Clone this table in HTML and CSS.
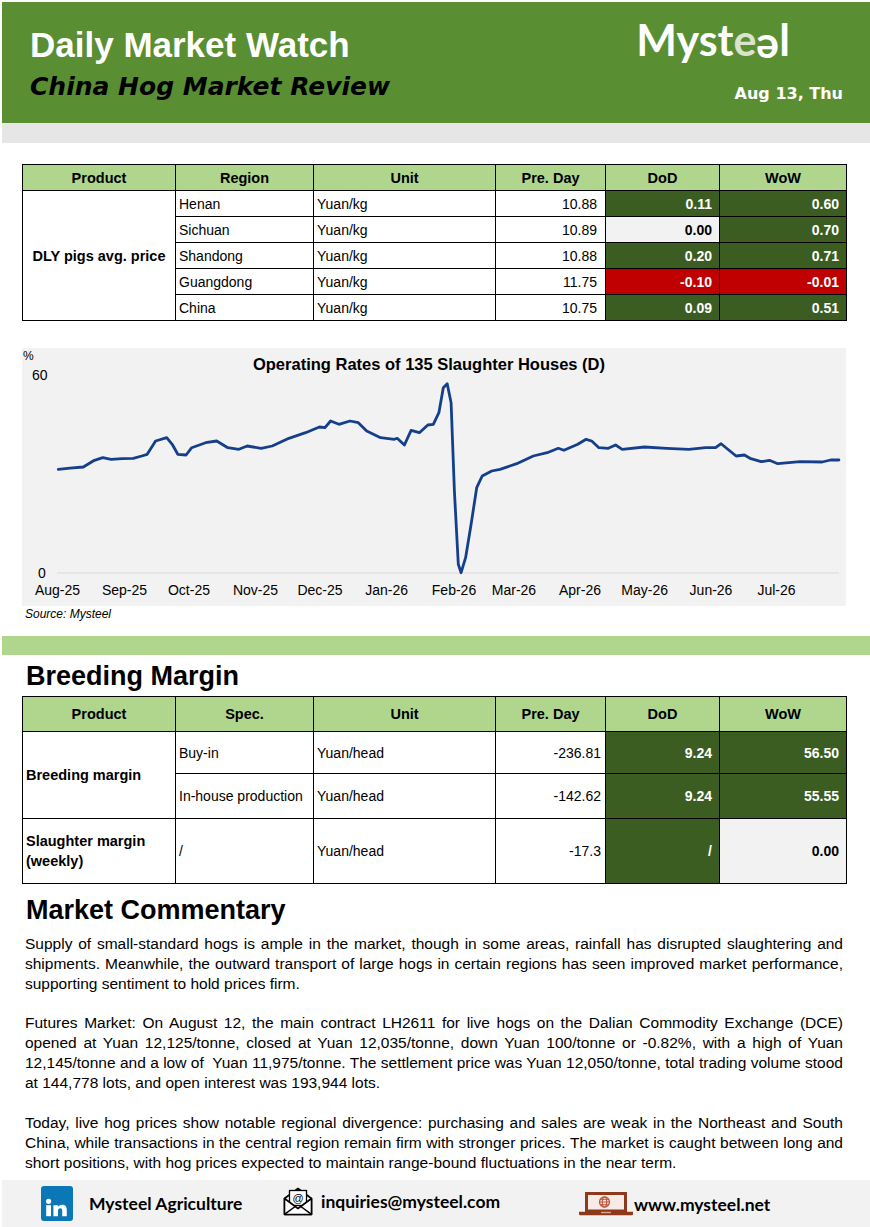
FILE: index.html
```html
<!DOCTYPE html>
<html lang="en">
<head>
<meta charset="utf-8">
<title>Daily Market Watch - China Hog Market Review</title>
<link rel="stylesheet" href="styles.css">
</head>
<body>
<div class="page">
  <header class="masthead">
    <div class="titles">
      <h1 class="title">Daily Market Watch</h1>
      <h2 class="subtitle">China Hog Market Review</h2>
    </div>
    <div class="brand">
      <div class="logo">Myst<span class="e1">e</span><span class="e2">e</span>l</div>
      <div class="date">Aug 13, Thu</div>
    </div>
  </header>
  <div class="band-gray"></div>

  <section class="content">
    <table class="data t1">
      <colgroup>
        <col class="c1"><col class="c2"><col class="c3"><col class="c4"><col class="c5"><col class="c6">
      </colgroup>
      <tr class="hd"><th>Product</th><th>Region</th><th>Unit</th><th>Pre. Day</th><th>DoD</th><th>WoW</th></tr>
      <tr><td class="prod" rowspan="5">DLY pigs avg. price</td><td>Henan</td><td>Yuan/kg</td><td class="num">10.88</td><td class="pos">0.11</td><td class="pos">0.60</td></tr>
      <tr><td>Sichuan</td><td>Yuan/kg</td><td class="num">10.89</td><td class="zero">0.00</td><td class="pos">0.70</td></tr>
      <tr><td>Shandong</td><td>Yuan/kg</td><td class="num">10.88</td><td class="pos">0.20</td><td class="pos">0.71</td></tr>
      <tr><td>Guangdong</td><td>Yuan/kg</td><td class="num">11.75</td><td class="neg">-0.10</td><td class="neg">-0.01</td></tr>
      <tr><td>China</td><td>Yuan/kg</td><td class="num">10.75</td><td class="pos">0.09</td><td class="pos">0.51</td></tr>
    </table>

    <svg class="chart" width="824" height="258" viewBox="22 347 824 258">
      <text class="ax-unit" x="23" y="359">%</text>
      <text class="ch-title" x="429" y="369" text-anchor="middle">Operating Rates of 135 Slaughter Houses (D)</text>
      <text class="ax" x="32" y="379">60</text>
      <text class="ax" x="38" y="577">0</text>
      <line x1="57" y1="572" x2="839" y2="572" stroke="#d9d9d9" stroke-width="1"/>
      <polyline fill="none" stroke="#153f8b" stroke-width="2.8" stroke-linejoin="round" stroke-linecap="round"
        points="58.3,468.3 70,467.2 83.3,466 94.4,459.3 102.8,456.7 111.1,458.3 122,457.6 133.3,457.3 141.7,455 147.2,453.3 155.6,440 166.7,436.7 172.2,443.3 177.8,453.3 186.1,454 191.7,446.7 205.6,441.7 216.7,440 227.8,446.7 238.9,448.3 247.2,445 261.1,447.3 272.2,445 288.9,437.3 305.6,431.7 319.4,426 325,426.7 330.6,420 338.9,423.3 350,420 358.3,421.7 366.7,430 380.6,436.7 394.4,438.3 397.2,437.3 404.4,444 411.1,429.3 419.4,431.7 427.8,424 433.3,423.3 438.9,411.7 443.3,386.7 447.2,382.7 451.1,401.7 454.4,490 458.3,563.3 461.1,571.7 465.6,556.7 471.1,523.3 476.7,486.7 482.2,475 491.7,470 500,468.3 516.7,462.7 533.3,455 547.2,451.7 558.3,447.3 563.9,449.3 577.8,443.3 586.1,438.3 591.7,440 598.9,446.7 608.3,447.3 615.6,444 622.2,448.3 644.4,446 666.7,447.3 688.9,448.3 705.6,446.7 715.6,446.7 721.1,442.7 727.8,448.3 736.1,455 744.4,454 750,457.3 761.1,460.7 769.4,459.3 777.8,462.7 800,460.7 822.2,461 830.6,459 838.9,459"/>
      <g class="ax" text-anchor="middle">
        <text x="57.5" y="594">Aug-25</text>
        <text x="124.5" y="594">Sep-25</text>
        <text x="189" y="594">Oct-25</text>
        <text x="255.5" y="594">Nov-25</text>
        <text x="320" y="594">Dec-25</text>
        <text x="386.7" y="594">Jan-26</text>
        <text x="454" y="594">Feb-26</text>
        <text x="514" y="594">Mar-26</text>
        <text x="580" y="594">Apr-26</text>
        <text x="644.7" y="594">May-26</text>
        <text x="711" y="594">Jun-26</text>
        <text x="776.5" y="594">Jul-26</text>
      </g>
    </svg>
    <div class="source">Source: Mysteel</div>
  </section>

  <div class="band-green"></div>

  <section class="content">
    <h2 class="section-title">Breeding Margin</h2>
    <table class="data t2">
      <colgroup>
        <col class="c1"><col class="c2"><col class="c3"><col class="c4"><col class="c5"><col class="c6">
      </colgroup>
      <tr class="hd"><th>Product</th><th>Spec.</th><th>Unit</th><th>Pre. Day</th><th>DoD</th><th>WoW</th></tr>
      <tr class="r1"><td class="prod-left" rowspan="2">Breeding margin</td><td>Buy-in</td><td>Yuan/head</td><td class="num">-236.81</td><td class="pos">9.24</td><td class="pos">56.50</td></tr>
      <tr class="r2"><td>In-house production</td><td>Yuan/head</td><td class="num">-142.62</td><td class="pos">9.24</td><td class="pos">55.55</td></tr>
      <tr class="r3"><td class="prod-left wrap">Slaughter margin (weekly)</td><td>/</td><td>Yuan/head</td><td class="num">-17.3</td><td class="pos">/</td><td class="zero">0.00</td></tr>
    </table>

    <h2 class="section-title commentary-title">Market Commentary</h2>
    <p class="para p1">Supply of small-standard hogs is ample in the market, though in some areas, rainfall has disrupted slaughtering and shipments. Meanwhile, the outward transport of large hogs in certain regions has seen improved market performance, supporting sentiment to hold prices firm.</p>
    <p class="para p2">Futures Market: On August 12, the main contract LH2611 for live hogs on the Dalian Commodity Exchange (DCE) opened at Yuan 12,125/tonne, closed at Yuan 12,035/tonne, down Yuan 100/tonne or -0.82%, with a high of Yuan 12,145/tonne and a low of&nbsp; Yuan 11,975/tonne. The settlement price was Yuan 12,050/tonne, total trading volume stood at 144,778 lots, and open interest was 193,944 lots.</p>
    <p class="para p3">Today, live hog prices show notable regional divergence: purchasing and sales are weak in the Northeast and South China, while transactions in the central region remain firm with stronger prices. The market is caught between long and short positions, with hog prices expected to maintain range-bound fluctuations in the near term.</p>
  </section>

  <footer class="footer">
    <div class="f-item f-linkedin">
      <svg class="ico" width="32" height="35" viewBox="0 0 32 35" aria-hidden="true">
        <rect width="32" height="35" rx="3" fill="#0b77b6"/>
        <circle cx="7.6" cy="15.3" r="2.6" fill="#fff"/>
        <rect x="5.2" y="19.2" width="4.8" height="11" fill="#fff"/>
        <path d="M12.4 19.2h4.5v1.9c.8-1.4 2.3-2.3 4.3-2.3 3.4 0 4.6 2.1 4.6 5.4v6h-4.6v-5.4c0-1.5-.4-2.5-1.8-2.5-1.6 0-2.4 1.1-2.4 2.7v5.2h-4.6z" fill="#fff"/>
      </svg>
      <span>Mysteel Agriculture</span>
    </div>
    <div class="f-item f-mail">
      <svg class="ico" width="30" height="30" viewBox="0 0 30 30" aria-hidden="true">
        <path d="M1.5 12.5 L15 2.5 L28.5 12.5 V28.5 H1.5 Z" fill="#fff" stroke="#000" stroke-width="1.6" stroke-linejoin="round"/>
        <rect x="6.5" y="4.5" width="17" height="15" fill="#fff" stroke="#000" stroke-width="1.3"/>
        <text x="15" y="15.5" text-anchor="middle" class="at">@</text>
        <path d="M1.5 12.5 L15 22.5 L28.5 12.5 V28.5 H1.5 Z" fill="#fff" stroke="#000" stroke-width="1.6" stroke-linejoin="round"/>
        <path d="M1.8 28.2 L12.2 20.5 M28.2 28.2 L17.8 20.5" stroke="#000" stroke-width="1.5"/>
      </svg>
      <span>inquiries@mysteel.com</span>
    </div>
    <div class="f-item f-web">
      <svg class="ico" width="54" height="24" viewBox="0 0 54 24" aria-hidden="true">
        <rect x="7.5" y="1.5" width="39" height="17.5" fill="#f6ebe6" stroke="#8e3a1a" stroke-width="3"/>
        <circle cx="25.5" cy="10" r="5" fill="none" stroke="#c0553a" stroke-width="1.3"/>
        <ellipse cx="25.5" cy="10" rx="2.2" ry="5" fill="none" stroke="#c0553a" stroke-width="1.1"/>
        <path d="M20.5 10 H30.5 M21.3 7.3 H29.7 M21.3 12.7 H29.7" stroke="#c0553a" stroke-width="1"/>
        <path d="M0 19.8 H54 V22 Q54 23.2 52.8 23.2 H1.2 Q0 23.2 0 22 Z" fill="#8e3a1a"/>
        <rect x="22" y="19.8" width="10" height="1.4" fill="#d9a995"/>
      </svg>
      <span>www.mysteel.net</span>
    </div>
  </footer>
</div>
</body>
</html>
```

FILE: styles.css
```css
* {
  box-sizing: border-box;
}

body {
  margin: 0;
  background: #ffffff;
  color: #000000;
  font-family: "Liberation Sans", Arial, sans-serif;
}

.page {
  width: 870px;
  padding: 2px 0 0 2px;
}

/* ---------- masthead ---------- */
.masthead {
  height: 121px;
  background: #5a8e32;
  display: flex;
  justify-content: space-between;
  padding: 0 27px 0 28px;
}

.titles {
  padding-top: 23px;
}

.title {
  margin: 0;
  font: bold 35px/40px "Liberation Sans", Arial, sans-serif;
  color: #ffffff;
}

.subtitle {
  margin: 7px 0 0;
  font: italic bold 25px/30px "DejaVu Sans", Verdana, sans-serif;
  color: #000000;
}

.brand {
  display: flex;
  flex-direction: column;
  align-items: flex-end;
  padding-top: 11.5px;
}

.logo {
  font: bold 43px/52px "Lato", "Open Sans", sans-serif;
  color: #ffffff;
  margin-right: 53px;
}

.logo .e1 {
  color: #d9e4cf;
}

.logo .e2 {
  display: inline-block;
  transform-origin: 50% 31.7px;
  transform: rotate(180deg);
}

.date {
  margin-top: 18px;
  font: bold 16px/20px "DejaVu Sans", Verdana, sans-serif;
  color: #ffffff;
}

.band-gray {
  height: 20px;
  background: #e6e6e6;
}

.band-green {
  height: 19px;
  margin-top: 14px;
  background: #b0d68e;
}

.content {
  padding: 0 24px 0 20px;
}

/* ---------- tables ---------- */
.data {
  width: 824px;
  border-collapse: collapse;
  table-layout: fixed;
  font-size: 14px;
}

.data .c1 { width: 153px; }
.data .c2 { width: 138px; }
.data .c3 { width: 182px; }
.data .c4 { width: 110px; }
.data .c5 { width: 114px; }
.data .c6 { width: 127px; }

.data th,
.data td {
  border: 1px solid #000000;
  padding: 0 3px;
  white-space: nowrap;
  overflow: hidden;
  text-align: left;
}

.data th {
  background: #b0d68e;
  font-weight: bold;
  font-size: 14.5px;
  text-align: center;
}

.data .prod {
  text-align: center;
  font-weight: bold;
  font-size: 14.5px;
}

.data .prod-left {
  font-weight: bold;
  font-size: 14.5px;
}

.data .wrap {
  white-space: normal;
  line-height: 20px;
}

.data .num {
  text-align: right;
  padding-right: 8px;
}

.t2 .num {
  padding-right: 4px;
}

.data .pos,
.data .neg,
.data .zero {
  text-align: right;
  font-weight: bold;
  padding-right: 7px;
}

.data .pos {
  background: #3b5d22;
  color: #ffffff;
}

.data .neg {
  background: #c00000;
  color: #ffffff;
}

.data .zero {
  background: #f2f2f2;
  color: #000000;
}

.t1 {
  margin-top: 21px;
}

.t1 tr {
  height: 26px;
}

.t2 {
  margin-top: 4px;
}

.t2 .hd { height: 35px; }
.t2 .r1 { height: 42px; }
.t2 .r2 { height: 45px; }
.t2 .r3 { height: 65px; }

/* ---------- chart ---------- */
.chart {
  display: block;
  margin-top: 27px;
  background: #f2f2f2;
}

.chart text {
  font-family: "Liberation Sans", Arial, sans-serif;
  fill: #000000;
}

.chart .ch-title {
  font-size: 16.5px;
  font-weight: bold;
}

.chart .ax,
.chart .ax text {
  font-size: 14px;
}

.chart .ax-unit {
  font-size: 12px;
}

.source {
  font: italic 12px/16px "Liberation Sans", Arial, sans-serif;
  margin-left: 3px;
}

/* ---------- sections ---------- */
.section-title {
  margin: 5px 0 0 4px;
  font: bold 27px/32px "Liberation Sans", Arial, sans-serif;
}

.commentary-title {
  margin-top: 10px;
}

.para {
  margin: 0 3px;
  font-size: 15.5px;
  line-height: 20px;
  text-align: justify;
}

.p1 { margin-top: 8px; }
.p2 { margin-top: 18.5px; }
.p3 { margin-top: 20px; }

/* ---------- footer ---------- */
.footer {
  margin-top: 7px;
  height: 47px;
  background: #f2f2f2;
  display: flex;
  align-items: center;
  padding-left: 39px;
  font: bold 17.5px "Lato", "Liberation Sans", sans-serif;
}

.f-item {
  display: flex;
  align-items: center;
}

.ico {
  display: block;
  flex: none;
}

.f-linkedin {
  width: 242px;
  gap: 16px;
}

.f-mail {
  width: 296px;
  gap: 8px;
  margin-top: -4px;
}

.f-web {
  gap: 1px;
  margin-top: 2px;
}

.at {
  font: 11px "Liberation Sans", Arial, sans-serif;
}
```
